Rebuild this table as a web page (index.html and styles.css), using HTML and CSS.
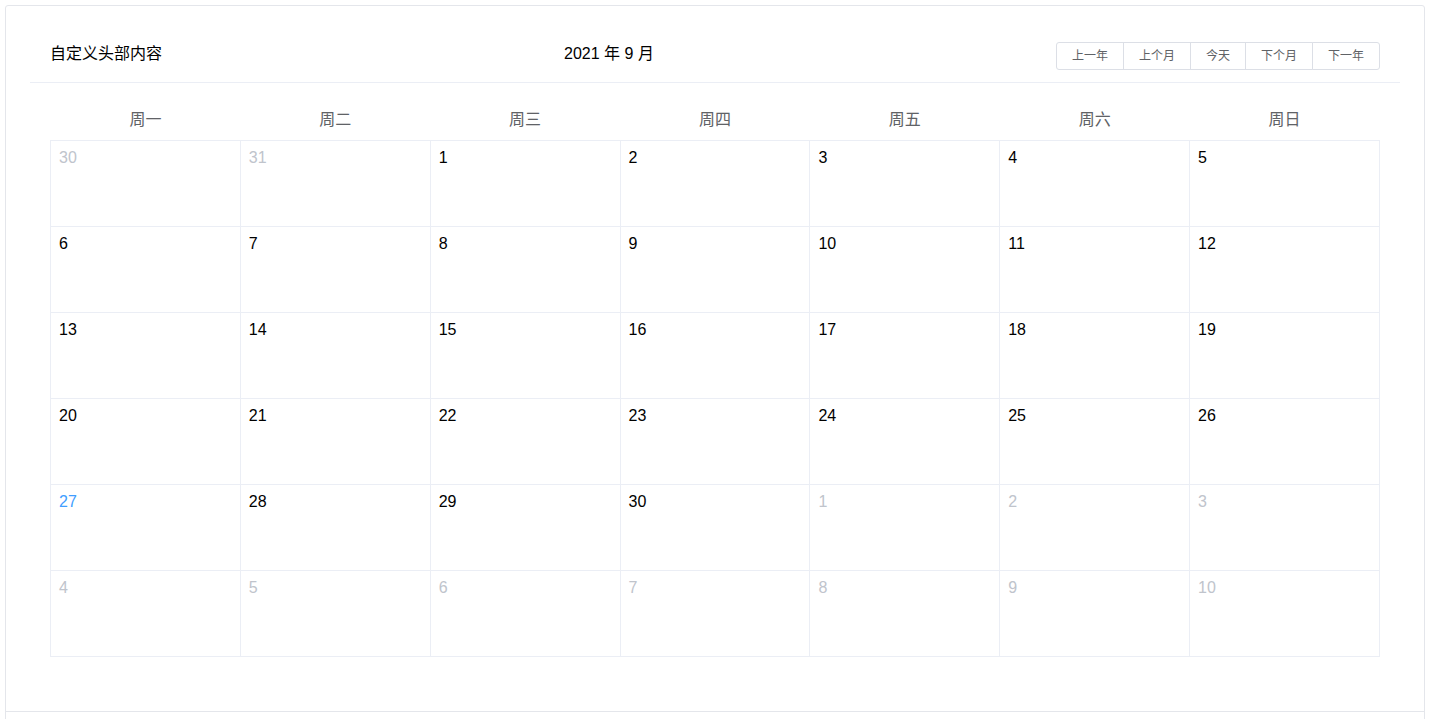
FILE: index.html
```html
<!DOCTYPE html>
<html lang="zh-CN">
<head>
<meta charset="utf-8">
<title>Calendar</title>
<link rel="stylesheet" href="styles.css">
</head>
<body>
<div class="demo-block">
  <div class="source">
    <div class="calendar">
      <div class="cal-header">
        <div class="cal-custom">自定义头部内容</div>
        <div class="cal-title">2021 年 9 月</div>
        <div class="btn-group">
          <button class="btn">上一年</button>
          <button class="btn">上个月</button>
          <button class="btn">今天</button>
          <button class="btn">下个月</button>
          <button class="btn">下一年</button>
        </div>
      </div>
      <div class="cal-body">
        <table class="cal-table">
          <thead>
            <tr><th>周一</th><th>周二</th><th>周三</th><th>周四</th><th>周五</th><th>周六</th><th>周日</th></tr>
          </thead>
          <tbody>
            <tr>
              <td class="other"><div class="day">30</div></td>
              <td class="other"><div class="day">31</div></td>
              <td><div class="day">1</div></td>
              <td><div class="day">2</div></td>
              <td><div class="day">3</div></td>
              <td><div class="day">4</div></td>
              <td><div class="day">5</div></td>
            </tr>
            <tr>
              <td><div class="day">6</div></td>
              <td><div class="day">7</div></td>
              <td><div class="day">8</div></td>
              <td><div class="day">9</div></td>
              <td><div class="day">10</div></td>
              <td><div class="day">11</div></td>
              <td><div class="day">12</div></td>
            </tr>
            <tr>
              <td><div class="day">13</div></td>
              <td><div class="day">14</div></td>
              <td><div class="day">15</div></td>
              <td><div class="day">16</div></td>
              <td><div class="day">17</div></td>
              <td><div class="day">18</div></td>
              <td><div class="day">19</div></td>
            </tr>
            <tr>
              <td><div class="day">20</div></td>
              <td><div class="day">21</div></td>
              <td><div class="day">22</div></td>
              <td><div class="day">23</div></td>
              <td><div class="day">24</div></td>
              <td><div class="day">25</div></td>
              <td><div class="day">26</div></td>
            </tr>
            <tr>
              <td class="today"><div class="day">27</div></td>
              <td><div class="day">28</div></td>
              <td><div class="day">29</div></td>
              <td><div class="day">30</div></td>
              <td class="other"><div class="day">1</div></td>
              <td class="other"><div class="day">2</div></td>
              <td class="other"><div class="day">3</div></td>
            </tr>
            <tr>
              <td class="other"><div class="day">4</div></td>
              <td class="other"><div class="day">5</div></td>
              <td class="other"><div class="day">6</div></td>
              <td class="other"><div class="day">7</div></td>
              <td class="other"><div class="day">8</div></td>
              <td class="other"><div class="day">9</div></td>
              <td class="other"><div class="day">10</div></td>
            </tr>
          </tbody>
        </table>
      </div>
    </div>
  </div>
  <div class="meta"></div>
</div>
</body>
</html>
```

FILE: styles.css
```css
html, body {
  margin: 0;
  padding: 0;
  height: 719px;
  overflow: hidden;
  background: #fff;
}

body {
  font-family: "Liberation Sans", Arial, "Noto Sans CJK SC", sans-serif;
  color: #000;
  padding: 5px 6px 0 5px;
  box-sizing: border-box;
}

.demo-block {
  border: 1px solid #e4e6eb;
  border-radius: 3px;
}

.source {
  padding: 24px 24px 19px;
}

.meta {
  border-top: 1px solid #e4e6eb;
  height: 40px;
}

.cal-header {
  display: flex;
  justify-content: space-between;
  padding: 12px 20px;
  border-bottom: 1px solid #ebeef5;
}

.cal-custom,
.cal-title {
  font-size: 16px;
  line-height: 24px;
  color: #000;
}

.btn-group {
  display: flex;
  height: 28px;
}

.btn {
  font-family: "Liberation Sans", Arial, "Noto Sans CJK SC", sans-serif;
  font-size: 12px;
  line-height: 12px;
  padding: 7px 15px;
  border: 1px solid #dcdfe6;
  background: #fff;
  color: #606266;
  margin: 0 0 0 -1px;
  border-radius: 0;
  box-sizing: border-box;
  height: 28px;
}

.btn:first-child {
  margin-left: 0;
  border-radius: 3px 0 0 3px;
}

.btn:last-child {
  border-radius: 0 3px 3px 0;
}

.cal-body {
  padding: 12px 20px 35px;
}

.cal-table {
  width: 100%;
  table-layout: fixed;
  border-collapse: collapse;
}

.cal-table th {
  padding: 14px 0 10px;
  font-size: 16px;
  line-height: 21px;
  font-weight: normal;
  color: #606266;
}

.cal-table td {
  border: 1px solid #ebeef5;
  vertical-align: top;
  padding: 0;
  color: #000;
}

.cal-table td.other {
  color: #c0c4cc;
}

.cal-table td.today {
  color: #409eff;
}

.day {
  box-sizing: border-box;
  height: 85px;
  padding: 8px;
  font-size: 16px;
  line-height: 18px;
}
```
